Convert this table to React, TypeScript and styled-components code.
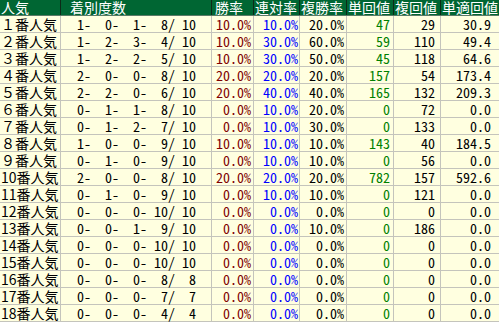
import styled, { createGlobalStyle } from "styled-components";

const GlobalStyle = createGlobalStyle`
  html, body {
    margin: 0;
    padding: 0;
    background: #ffffff;
  }
`;

const COLS = "61px 151px 42px 46px 47px 47px 47px 58px";

const Table = styled.div`
  width: 499px;
  overflow: hidden;
  font-family: "Noto Sans CJK JP", sans-serif;
  font-size: 14px;
`;

const HeadRow = styled.div`
  display: grid;
  grid-template-columns: ${COLS};
  height: 16px;
  box-sizing: border-box;
  background: #006633;
  color: #ffffff;
  border-bottom: 1px solid #5a7a66;
`;

const HeadCell = styled.div<{ $pad?: number }>`
  box-sizing: border-box;
  border-right: 1px solid #0d2a18;
  padding-left: ${(p) => p.$pad ?? 1}px;
  line-height: 15px;
  white-space: nowrap;
  &:last-child {
    border-right: none;
  }
`;

const Row = styled.div`
  display: grid;
  grid-template-columns: ${COLS};
  height: 17px;
  box-sizing: border-box;
  background: #ffffe0;
  border-bottom: 1px solid #c4c4bc;
`;

const Cell = styled.div<{ $color?: string; $align?: string; $padR?: number; $padL?: number; $mono?: boolean }>`
  box-sizing: border-box;
  border-right: 1px solid #c4c4bc;
  color: ${(p) => p.$color ?? "#000000"};
  text-align: ${(p) => p.$align ?? "right"};
  padding-right: ${(p) => p.$padR ?? 0}px;
  padding-left: ${(p) => p.$padL ?? 0}px;
  line-height: 16px;
  white-space: pre;
  font-family: ${(p) =>
    p.$mono
      ? `"Noto Sans Mono CJK JP", "Noto Sans CJK JP", monospace`
      : `"Noto Sans CJK JP", sans-serif`};
  font-feature-settings: ${(p) => (p.$mono ? `"hwid" 1` : "normal")};
  &:last-child {
    border-right: none;
  }
`;

type Rec = [number, number, number, number, string, string, string, number, number, string];

const data: Rec[] = [
  [1, 0, 1, 8, "10.0%", "10.0%", "20.0%", 47, 29, "30.9"],
  [1, 2, 3, 4, "10.0%", "30.0%", "60.0%", 59, 110, "49.4"],
  [1, 2, 2, 5, "10.0%", "30.0%", "50.0%", 45, 118, "64.6"],
  [2, 0, 0, 8, "20.0%", "20.0%", "20.0%", 157, 54, "173.4"],
  [2, 2, 0, 6, "20.0%", "40.0%", "40.0%", 165, 132, "209.3"],
  [0, 1, 1, 8, "0.0%", "10.0%", "20.0%", 0, 72, "0.0"],
  [0, 1, 2, 7, "0.0%", "10.0%", "30.0%", 0, 133, "0.0"],
  [1, 0, 0, 9, "10.0%", "10.0%", "10.0%", 143, 40, "184.5"],
  [0, 1, 0, 9, "0.0%", "10.0%", "10.0%", 0, 56, "0.0"],
  [2, 0, 0, 8, "20.0%", "20.0%", "20.0%", 782, 157, "592.6"],
  [0, 1, 0, 9, "0.0%", "10.0%", "10.0%", 0, 121, "0.0"],
  [0, 0, 0, 10, "0.0%", "0.0%", "0.0%", 0, 0, "0.0"],
  [0, 0, 1, 9, "0.0%", "0.0%", "10.0%", 0, 186, "0.0"],
  [0, 0, 0, 10, "0.0%", "0.0%", "0.0%", 0, 0, "0.0"],
  [0, 0, 0, 10, "0.0%", "0.0%", "0.0%", 0, 0, "0.0"],
  [0, 0, 0, 8, "0.0%", "0.0%", "0.0%", 0, 0, "0.0"],
  [0, 0, 0, 7, "0.0%", "0.0%", "0.0%", 0, 0, "0.0"],
  [0, 0, 0, 4, "0.0%", "0.0%", "0.0%", 0, 0, "0.0"],
];

const full = "０１２３４５６７８９";
const label = (n: number) => (n < 10 ? full[n] : String(n)) + "番人気";
const pad = (v: number, w: number) => String(v).padStart(w, " ");

const App: React.FC = () => {
  return (
    <>
      <GlobalStyle />
      <Table>
        <HeadRow>
          <HeadCell>人気</HeadCell>
          <HeadCell $pad={9}>着別度数</HeadCell>
          <HeadCell $pad={3}>勝率</HeadCell>
          <HeadCell>連対率</HeadCell>
          <HeadCell>複勝率</HeadCell>
          <HeadCell>単回値</HeadCell>
          <HeadCell>複回値</HeadCell>
          <HeadCell>単適回値</HeadCell>
        </HeadRow>
        {data.map((r, i) => {
          const total = r[0] + r[1] + r[2] + r[3];
          const counts = `${pad(r[0], 2)}- ${pad(r[1], 2)}- ${pad(r[2], 2)}- ${pad(r[3], 2)}/${pad(total, 3)}`;
          return (
            <Row key={i}>
              <Cell $align="left" $padL={1}>{label(i + 1)}</Cell>
              <Cell $align="left" $padL={9} $mono>{counts}</Cell>
              <Cell $color="#800000" $padR={2} $mono>{r[4]}</Cell>
              <Cell $color="#0000ff" $padR={1} $mono>{r[5]}</Cell>
              <Cell $padR={2} $mono>{r[6]}</Cell>
              <Cell $color="#008000" $padR={3} $mono>{r[7]}</Cell>
              <Cell $padR={5} $mono>{r[8]}</Cell>
              <Cell $padR={8} $mono>{r[9]}</Cell>
            </Row>
          );
        })}
      </Table>
    </>
  );
};

export default App;
